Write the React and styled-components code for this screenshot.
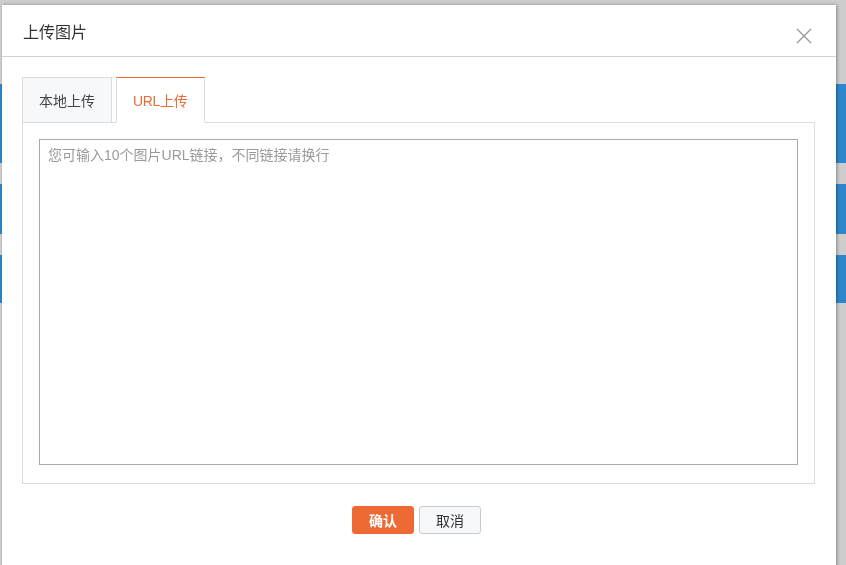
import React, { useState } from 'react';
import styled, { createGlobalStyle } from 'styled-components';

const GlobalStyle = createGlobalStyle`
  html, body {
    margin: 0;
    padding: 0;
    background: #cdcdcd;
    overflow: hidden;
  }
  body {
    font-family: "Liberation Sans", "Noto Sans CJK SC", sans-serif;
  }
`;

const BRAND = '#ee6a35';

function App() {
  const [tab, setTab] = useState('url');

  return (
    <>
      <GlobalStyle />
      <Page>
        <PageBar $h={79} $top={84} />
        <PageBar $h={50} $top={21} />
        <PageBar $h={48} $top={21} />
      </Page>
      <Dialog>
        <Header>
          <Title>上传图片</Title>
          <CloseButton aria-label="close">
            <svg width="16" height="16" viewBox="0 0 16 16">
              <path d="M1 1 L15 15 M15 1 L1 15" stroke="#9a9a9a" strokeWidth="1.4" fill="none" />
            </svg>
          </CloseButton>
        </Header>
        <Body>
          <Tabs>
            <Tab $active={tab === 'local'} onClick={() => setTab('local')}>本地上传</Tab>
            <Tab $active={tab === 'url'} onClick={() => setTab('url')}>URL上传</Tab>
          </Tabs>
          <Panel>
            <UrlInput placeholder="您可输入10个图片URL链接，不同链接请换行" />
          </Panel>
          <Footer>
            <Button $primary>确认</Button>
            <Button>取消</Button>
          </Footer>
        </Body>
      </Dialog>
    </>
  );
}

export default App;

const Page = styled.div`
  width: 846px;
  height: 565px;
  display: flex;
  flex-direction: column;
`;

const PageBar = styled.div`
  height: ${p => p.$h}px;
  margin-top: ${p => p.$top}px;
  background: #2f87cb;
  flex-shrink: 0;
`;

const Dialog = styled.div`
  position: fixed;
  top: 5px;
  left: 2px;
  width: 834px;
  height: 570px;
  background: #fff;
  box-shadow: 1px 0 3px rgba(0, 0, 0, 0.35);
  display: flex;
  flex-direction: column;
`;

const Header = styled.div`
  height: 52px;
  border-bottom: 1px solid #d2d2d2;
  display: flex;
  align-items: center;
  justify-content: space-between;
  padding: 0 24px 0 21px;
  box-sizing: border-box;
`;

const Title = styled.h3`
  margin: 0;
  font-size: 16px;
  font-weight: 400;
  color: #333;
  font-family: "Noto Sans CJK SC", sans-serif;
`;

const CloseButton = styled.button`
  border: 0;
  background: none;
  padding: 0;
  width: 16px;
  height: 16px;
  cursor: pointer;
  display: flex;
  margin-top: 11px;
`;

const Body = styled.div`
  padding: 20px 21px 0 20px;
  display: flex;
  flex-direction: column;
`;

const Tabs = styled.div`
  display: flex;
  gap: 4px;
  position: relative;
  z-index: 1;
`;

const Tab = styled.div`
  height: 46px;
  box-sizing: border-box;
  padding: 0 16px 0 16px;
  display: flex;
  align-items: center;
  font-size: 14px;
  font-family: "Liberation Sans", "Noto Sans CJK SC", sans-serif;
  cursor: pointer;
  border: 1px solid #dcdcdc;
  border-top: ${p => (p.$active ? `1px solid ${BRAND}` : '1px solid #dcdcdc')};
  border-bottom: ${p => (p.$active ? '1px solid #fff' : '1px solid #dcdcdc')};
  background: ${p => (p.$active ? '#fff' : '#f7f8fa')};
  color: ${p => (p.$active ? BRAND : '#444')};
  letter-spacing: ${p => (p.$active ? '-0.3px' : '0')};
  margin-bottom: -1px;
`;

const Panel = styled.div`
  border: 1px solid #dcdcdc;
  padding: 16px 16px 18px 16px;
  height: 362px;
  box-sizing: border-box;
  display: flex;
`;

const UrlInput = styled.textarea`
  flex: 1;
  resize: none;
  border: 1px solid #a8a8b0;
  outline: none;
  padding: 4px 8px;
  font-size: 14px;
  font-family: "Liberation Sans", "Noto Sans CJK SC", sans-serif;
  color: #333;
  &::placeholder {
    color: #9a9a9a;
  }
`;

const Footer = styled.div`
  display: flex;
  justify-content: center;
  gap: 5px;
  padding-top: 22px;
  padding-right: 4px;
`;

const Button = styled.button`
  width: 62px;
  height: 28px;
  border-radius: 3px;
  font-size: 14px;
  font-family: "Liberation Sans", "Noto Sans CJK SC", sans-serif;
  font-weight: ${p => (p.$primary ? 700 : 400)};
  border: 1px solid ${p => (p.$primary ? BRAND : '#c9c9d2')};
  background: ${p => (p.$primary ? BRAND : '#f7f8fa')};
  color: ${p => (p.$primary ? '#fff' : '#333')};
  cursor: pointer;
  padding: 0;
`;
